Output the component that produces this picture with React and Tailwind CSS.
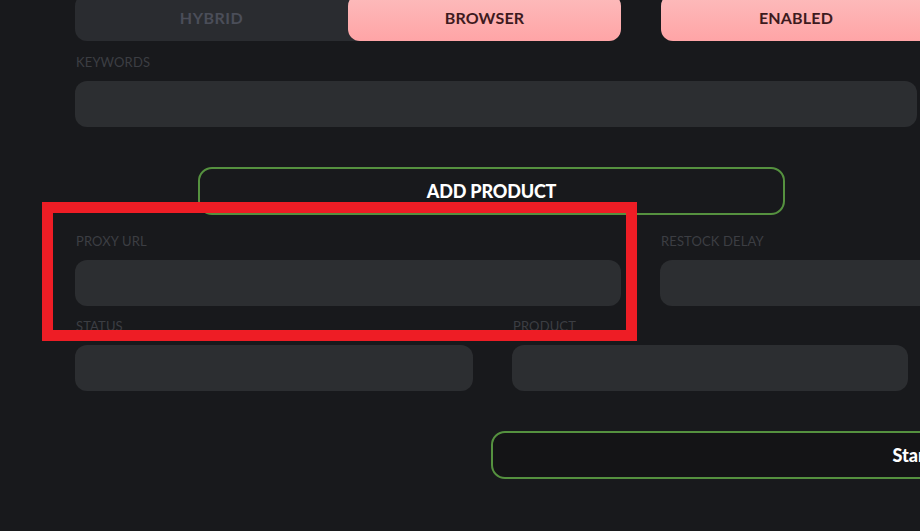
import React from "react";

const Label = ({ children, className = "" }) => (
  <div className={`text-[13px] leading-none tracking-[0.01em] text-[#3c3e43] uppercase ${className}`}>{children}</div>
);

const Input = ({ className = "" }) => (
  <div className={`h-[46px] rounded-[12px] bg-[#2c2e31] ${className}`} />
);

export default function App() {
  return (
    <div
      className="relative w-[920px] h-[531px] overflow-hidden bg-[#18191c]"
      style={{ fontFamily: "Lato, 'Noto Sans', sans-serif" }}
    >
      <div className="flex flex-col pl-[75px] w-[1300px]">
        {/* top toggles */}
        <div className="flex gap-[40px] -mt-[6px] h-[47px]">
          <div className="flex w-[546px] rounded-[12px] bg-[#2a2c30]">
            <div className="flex-1 flex items-center justify-center text-[16px] font-bold tracking-[0.03em] text-[#4b4e59]">
              HYBRID
            </div>
            <div className="flex-1 flex items-center justify-center rounded-[12px] bg-gradient-to-b from-[#fcbcbc] to-[#ffa4a6] text-[16px] font-bold tracking-[0.01em] text-[#3d1a20]">
              BROWSER
            </div>
          </div>
          <div className="flex w-[546px] rounded-[12px] bg-[#2a2c30]">
            <div className="w-[270px] flex items-center justify-center rounded-[12px] bg-gradient-to-b from-[#fcbcbc] to-[#ffa4a6] text-[16px] font-bold tracking-[0.01em] text-[#3d1a20]">
              ENABLED
            </div>
          </div>
        </div>

        <Label className="mt-[15px] pl-[1px]">Keywords</Label>
        <Input className="mt-[12px] w-[842px]" />

        <div className="mt-[40px] ml-[123px] w-[587px] h-[48px] rounded-[14px] border-2 border-[#55913f] flex items-center justify-center text-[18px] font-black tracking-[-0.01em] text-white">
          ADD PRODUCT
        </div>

        <div className="flex gap-[39px] mt-[20px]">
          <div className="w-[546px] flex flex-col">
            <Label className="pl-[1px]">Proxy URL</Label>
            <Input className="mt-[12px]" />
          </div>
          <div className="w-[546px] flex flex-col">
            <Label className="pl-[1px]">Restock Delay</Label>
            <Input className="mt-[12px]" />
          </div>
        </div>

        <div className="flex gap-[39px] mt-[14px]">
          <div className="w-[398px] flex flex-col">
            <Label className="pl-[1px]">Status</Label>
            <Input className="mt-[12px]" />
          </div>
          <div className="w-[396px] flex flex-col">
            <Label className="pl-[1px]">Product</Label>
            <Input className="mt-[12px]" />
          </div>
        </div>

        <div className="mt-[40px] ml-[416px] w-[842px] h-[48px] rounded-[14px] border-2 border-[#55913f] bg-[#141416] flex items-center justify-center text-[18px] font-black text-white">
          Start
        </div>
      </div>

      {/* red highlight box */}
      <div className="absolute left-[42px] top-[202px] w-[595px] h-[139px] border-[11px] border-[#ee1d25]" />
    </div>
  );
}
